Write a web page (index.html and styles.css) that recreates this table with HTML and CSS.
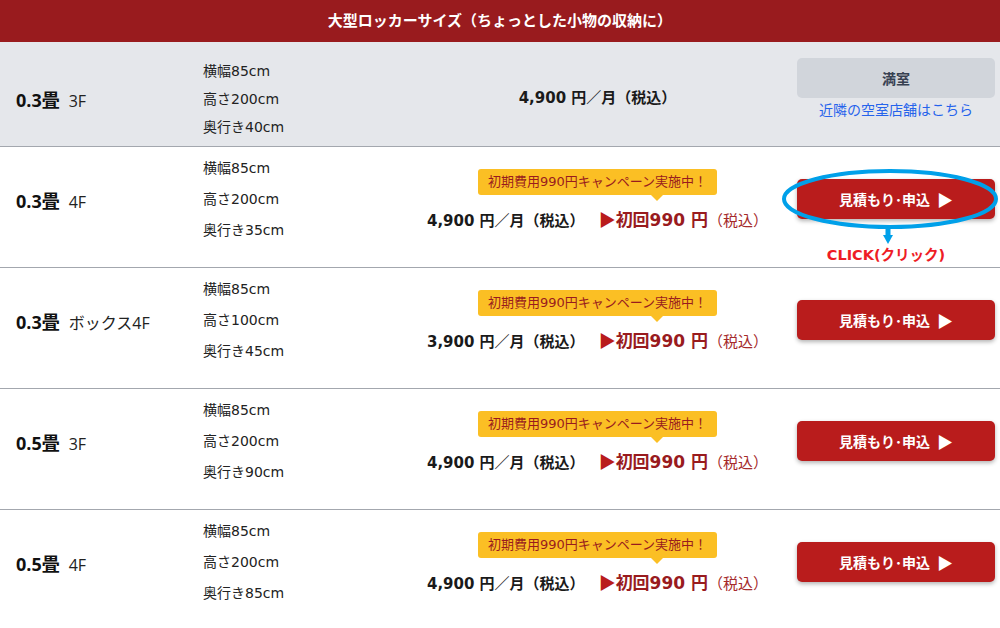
FILE: index.html
```html
<!DOCTYPE html>
<html lang="ja">
<head>
<meta charset="utf-8">
<title>大型ロッカーサイズ</title>
<link rel="stylesheet" href="styles.css">
</head>
<body>
<div class="table">
  <div class="head">大型ロッカーサイズ（ちょっとした小物の収納に）</div>

  <div class="row row--full">
    <div class="size"><b>0.3畳</b><span>3F</span></div>
    <div class="dims"><div>横幅85cm</div><div>高さ200cm</div><div>奥行き40cm</div></div>
    <div class="price"><div class="line"><span class="base">4,900 円／月（税込）</span></div></div>
    <div class="action action--full">
      <div class="btn btn--full">満室</div>
      <a class="near" href="#">近隣の空室店舗はこちら</a>
    </div>
  </div>

  <div class="row">
    <div class="size"><b>0.3畳</b><span>4F</span></div>
    <div class="dims"><div>横幅85cm</div><div>高さ200cm</div><div>奥行き35cm</div></div>
    <div class="price campaign">
      <div class="badge">初期費用990円キャンペーン実施中！</div>
      <div class="line"><span class="base">4,900 円／月（税込）</span><span class="first"><i>▶</i>初回990 円</span><span class="tax">（税込）</span></div>
    </div>
    <div class="action">
      <div class="btn">見積もり･申込<i>▶</i></div>
      <svg class="circle" width="220" height="80" viewBox="0 0 220 80">
        <ellipse cx="109" cy="31" rx="106" ry="28" fill="none" stroke="#00a0e9" stroke-width="4"/>
        <rect x="104.5" y="58" width="5" height="11" fill="#00a0e9"/>
        <polygon points="102,67 112,67 107,76" fill="#00a0e9"/>
      </svg>
      <div class="click">CLICK(クリック)</div>
    </div>
  </div>

  <div class="row">
    <div class="size"><b>0.3畳</b><span>ボックス4F</span></div>
    <div class="dims"><div>横幅85cm</div><div>高さ100cm</div><div>奥行き45cm</div></div>
    <div class="price campaign">
      <div class="badge">初期費用990円キャンペーン実施中！</div>
      <div class="line"><span class="base">3,900 円／月（税込）</span><span class="first"><i>▶</i>初回990 円</span><span class="tax">（税込）</span></div>
    </div>
    <div class="action"><div class="btn">見積もり･申込<i>▶</i></div></div>
  </div>

  <div class="row">
    <div class="size"><b>0.5畳</b><span>3F</span></div>
    <div class="dims"><div>横幅85cm</div><div>高さ200cm</div><div>奥行き90cm</div></div>
    <div class="price campaign">
      <div class="badge">初期費用990円キャンペーン実施中！</div>
      <div class="line"><span class="base">4,900 円／月（税込）</span><span class="first"><i>▶</i>初回990 円</span><span class="tax">（税込）</span></div>
    </div>
    <div class="action"><div class="btn">見積もり･申込<i>▶</i></div></div>
  </div>

  <div class="row">
    <div class="size"><b>0.5畳</b><span>4F</span></div>
    <div class="dims"><div>横幅85cm</div><div>高さ200cm</div><div>奥行き85cm</div></div>
    <div class="price campaign">
      <div class="badge">初期費用990円キャンペーン実施中！</div>
      <div class="line"><span class="base">4,900 円／月（税込）</span><span class="first"><i>▶</i>初回990 円</span><span class="tax">（税込）</span></div>
    </div>
    <div class="action"><div class="btn">見積もり･申込<i>▶</i></div></div>
  </div>
</div>
</body>
</html>
```
FILE: styles.css
```css
* { box-sizing: border-box; }
html, body { margin: 0; padding: 0; background: #fff; }
body {
  font-family: "DejaVu Sans", "Noto Sans CJK JP", sans-serif;
  color: #1a1a1a;
  width: 1000px;
  overflow: hidden;
}
.table { width: 1000px; }
.head {
  height: 42px;
  line-height: 42px;
  background: #991b1e;
  color: #fff;
  font-weight: 700;
  font-size: 15px;
  text-align: center;
}
.row {
  display: grid;
  grid-template-columns: 203px 195px 1fr 198px;
  padding: 6px 5px 21px 0;
  height: 121px;
  border-bottom: 1px solid #a3a7ae;
  align-items: center;
}
.row--full {
  background: #e5e7eb;
  padding-top: 15px;
  padding-bottom: 5px;
  height: 105px;
}
.size {
  padding-left: 16px;
  display: flex;
  align-items: baseline;
  font-family: "Open Sans", "Noto Sans CJK JP", sans-serif;
}
.size b {
  font-size: 18px;
  font-weight: 700;
  color: #111;
}
.size span { font-size: 16px; margin-left: 9px; color: #222; }
.dims { font-size: 14px; line-height: 31px; color: #222; }
.row--full .dims { line-height: 28px; }
.price {
  display: flex;
  flex-direction: column;
  align-items: center;
  margin-bottom: 2px;
}
.campaign { padding-top: 5px; }
.badge {
  position: relative;
  background: #fbbf24;
  color: #991b1e;
  font-size: 13px;
  height: 26px;
  line-height: 26px;
  padding: 0 10px;
  border-radius: 3px;
  margin-bottom: 12px;
}
.badge::after {
  content: "";
  position: absolute;
  left: 173px;
  bottom: -6px;
  border-left: 6px solid transparent;
  border-right: 6px solid transparent;
  border-top: 6px solid #fbbf24;
}
.line {
  display: flex;
  align-items: baseline;
  line-height: 24px;
  white-space: nowrap;
}
.base { font-size: 15px; font-weight: 700; color: #1a1a1a; }
.first {
  font-size: 17px;
  font-weight: 700;
  color: #991b1e;
  margin-left: 14px;
}
.first i {
  font-family: "Noto Sans CJK JP", sans-serif;
  font-style: normal;
  color: #b91c1c;
}
.tax { font-size: 15px; color: #a52a2a; }
.action { position: relative; margin-bottom: 2px; }
.action--full { align-self: start; margin-top: 1px; text-align: center; }
.btn {
  height: 40px;
  border-radius: 5px;
  background: #b91c1c;
  color: #fff;
  font-size: 14px;
  font-weight: 700;
  display: flex;
  align-items: center;
  justify-content: center;
  box-shadow: 0 2px 4px rgba(0, 0, 0, 0.3);
}
.btn i {
  font-family: "Noto Sans CJK JP", sans-serif;
  font-style: normal;
  margin-left: 7px;
  font-size: 16px;
}
.btn--full {
  background: #d1d5db;
  color: #374151;
  box-shadow: none;
}
.near {
  display: block;
  margin-top: 2px;
  line-height: 20px;
  font-size: 14px;
  color: #2563eb;
  text-decoration: none;
}
.circle {
  position: absolute;
  left: -16px;
  top: -11px;
}
.click {
  position: absolute;
  left: 0;
  width: 178px;
  top: 68px;
  text-align: center;
  line-height: 16px;
  font-size: 14.5px;
  font-weight: 700;
  color: #ee1c25;
}
```
